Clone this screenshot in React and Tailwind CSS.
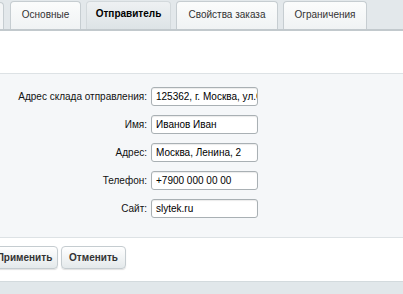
import React from 'react';

const tabs = [
  { label: 'Основные', w: 'w-[71px]' },
  { label: 'Отправитель', w: 'w-[85px]', active: true },
  { label: 'Свойства заказа', w: 'w-[102px]' },
  { label: 'Ограничения', w: 'w-[84px]' },
];

const fields = [
  { label: 'Адрес склада отправления:', value: '125362, г. Москва, ул.Свободы, 1' },
  { label: 'Имя:', value: 'Иванов Иван' },
  { label: 'Адрес:', value: 'Москва, Ленина, 2' },
  { label: 'Телефон:', value: '+7900 000 00 00' },
  { label: 'Сайт:', value: 'slytek.ru' },
];

function Tab({ label, w, active }) {
  return (
    <div
      className={`${w} h-[28px] rounded-t-[4px] border border-b-0 flex items-center justify-center text-[10px] leading-none ${
        active
          ? 'border-[#d3d9dc] bg-gradient-to-b from-[#eef1f3] to-[#dde3e6] font-bold text-black pb-[4px]'
          : 'border-[#c6cdd1] bg-gradient-to-b from-[#fbfcfc] to-[#f0f3f4] text-[#333] pb-[1px]'
      }`}
    >
      {label}
    </div>
  );
}

export default function App() {
  return (
    <div className="w-[403px] h-[294px] overflow-hidden bg-white flex flex-col" style={{ fontFamily: '"Liberation Sans", Arial, sans-serif' }}>
      <div className="h-[31px] bg-[#e3e8eb] border-b-2 border-[#c2c9cd] flex items-end gap-[5px] pl-[10px] relative shrink-0">
        <div className="absolute left-[-20px] bottom-0 w-[24px] h-[27px] rounded-t-[4px] border border-b-0 border-[#c6cdd1] bg-[#f3f5f6]" />
        {tabs.map((t) => (
          <Tab key={t.label} {...t} />
        ))}
      </div>

      <div className="h-[42px] shrink-0" />

      <div className="border-t border-b border-[#dde2e5] bg-[#f5f7f9] pt-[13px] pb-[19px] shrink-0">
        <div className="grid grid-cols-[147px_107px] gap-x-[4px] gap-y-[9px]">
          {fields.map((f) => (
            <React.Fragment key={f.label}>
              <div className="text-right text-[10px] text-[#111] pt-[3px] leading-[13px] whitespace-nowrap">{f.label}</div>
              <div className="h-[19px] rounded-[3px] border border-[#a9b0b4] bg-white overflow-hidden flex items-center px-[4px] text-[10px] text-black whitespace-nowrap shadow-[inset_0_1px_1px_rgba(0,0,0,0.08)]">
                {f.value}
              </div>
            </React.Fragment>
          ))}
        </div>
      </div>

      <div className="h-[43px] shrink-0 flex items-start gap-[3px] pt-[8px] pl-0">
        <button className="ml-[-9px] w-[67px] h-[23px] shrink-0 rounded-[4px] border border-[#c5ccd0] bg-gradient-to-b from-white to-[#e4e9eb] text-[10px] font-bold text-[#333] shadow-[0_1px_1px_rgba(0,0,0,0.12)]">
          Применить
        </button>
        <button className="w-[65px] h-[23px] shrink-0 rounded-[4px] border border-[#c5ccd0] bg-gradient-to-b from-white to-[#e4e9eb] text-[10px] font-bold text-[#333] shadow-[0_1px_1px_rgba(0,0,0,0.12)]">
          Отменить
        </button>
      </div>

      <div className="flex-1 bg-[#e1e7ea] border-t border-[#d3dadd]" />
    </div>
  );
}
